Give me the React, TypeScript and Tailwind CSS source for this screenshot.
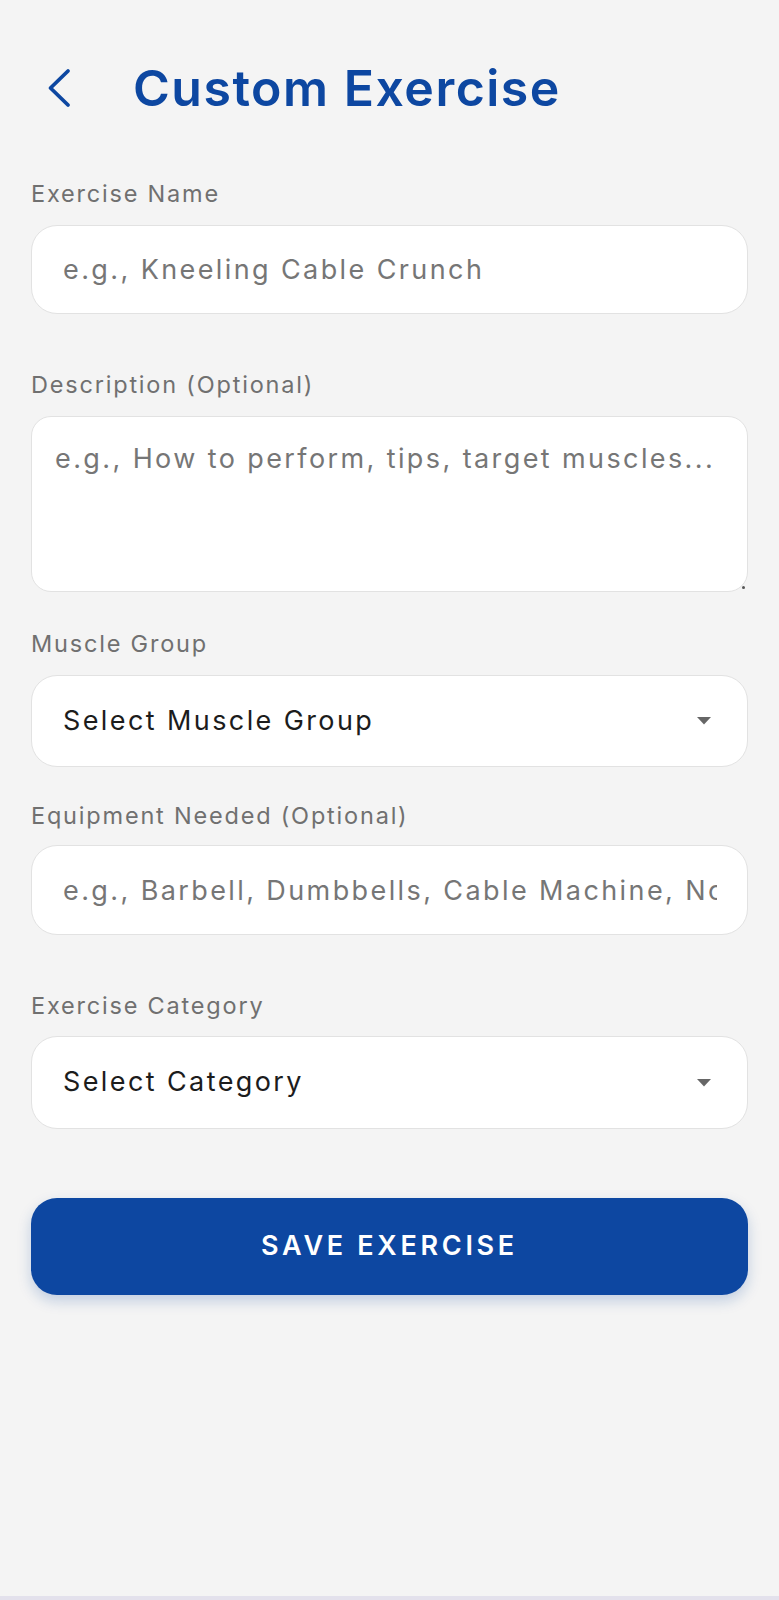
import React from "react";

const inputBase =
  "w-full bg-white border border-[#e2e2e2] text-[27px] tracking-[2.4px] text-[#1f1f1f] placeholder:text-[#767676] outline-none";

function Label({ children, className = "" }: { children: React.ReactNode; className?: string }) {
  return (
    <div className={`h-[28px] leading-[28px] text-[23.5px] text-[#707070] tracking-[1.8px] ${className}`}>
      {children}
    </div>
  );
}

function SelectBox({ text, className = "" }: { text: string; className?: string }) {
  return (
    <button
      type="button"
      className={`w-full flex items-center justify-between bg-white border border-[#e2e2e2] rounded-[26px] pl-[31px] pr-[36px] text-[27px] tracking-[2.4px] text-[#1c1c1c] ${className}`}
    >
      <span>{text}</span>
      <svg width="14" height="8" viewBox="0 0 14 8" className="fill-[#666666]">
        <path d="M0 0 L14 0 L7 7.5 Z" />
      </svg>
    </button>
  );
}

export default function App() {
  return (
    <div className="min-h-[1600px] bg-[#f4f4f4] flex flex-col font-['Inter',sans-serif]">
      <div className="px-[31px] pt-[60px]">
        {/* header */}
        <div className="h-[56px] flex items-center">
          <button type="button" className="ml-[15px] w-[27px] h-[40px] flex items-center justify-center">
            <svg width="27" height="40" viewBox="0 0 27 40" fill="none">
              <path
                d="M22 3 L4.5 20 L22 37"
                stroke="#0d47a1"
                strokeWidth="3.8"
                strokeLinecap="round"
                strokeLinejoin="round"
              />
            </svg>
          </button>
          <h1 className="ml-[60px] text-[50px] font-semibold text-[#0d47a1] tracking-[1.5px] leading-none">
            Custom Exercise
          </h1>
        </div>

        {/* form */}
        <Label className="mt-[64px]">Exercise Name</Label>
        <input
          className={`${inputBase} mt-[17px] h-[89px] rounded-[26px] pl-[31px] pr-[30px]`}
          placeholder="e.g., Kneeling Cable Crunch"
        />

        <Label className="mt-[57px]">Description (Optional)</Label>
        <div className="relative mt-[17px]">
          <textarea
            className={`${inputBase} block h-[176px] rounded-[20px] pl-[23px] pr-[20px] pt-[24px] resize-none leading-[36px]`}
            placeholder="e.g., How to perform, tips, target muscles..."
          />
          {/* resize grip dot */}
          <span className="absolute right-[3px] bottom-[3px] w-[3px] h-[3px] rounded-full bg-[#555555]" />
        </div>

        <Label className="mt-[38px]">Muscle Group</Label>
        <SelectBox text="Select Muscle Group" className="mt-[17px] h-[92px]" />

        <Label className="mt-[35px]">Equipment Needed (Optional)</Label>
        <input
          className={`${inputBase} mt-[15px] h-[90px] rounded-[26px] pl-[31px] pr-[30px]`}
          placeholder="e.g., Barbell, Dumbbells, Cable Machine, None"
        />

        <Label className="mt-[57px]">Exercise Category</Label>
        <SelectBox text="Select Category" className="mt-[16px] h-[93px]" />

        <button
          type="button"
          className="mt-[69px] w-full h-[97px] rounded-[26px] bg-[#0d47a1] text-white text-[27px] font-semibold tracking-[3.7px] shadow-[0_6px_14px_rgba(13,71,161,0.22)]"
        >
          SAVE EXERCISE
        </button>
      </div>

      <div className="mt-auto h-[4px] bg-[#e3e1ec]" />
    </div>
  );
}
